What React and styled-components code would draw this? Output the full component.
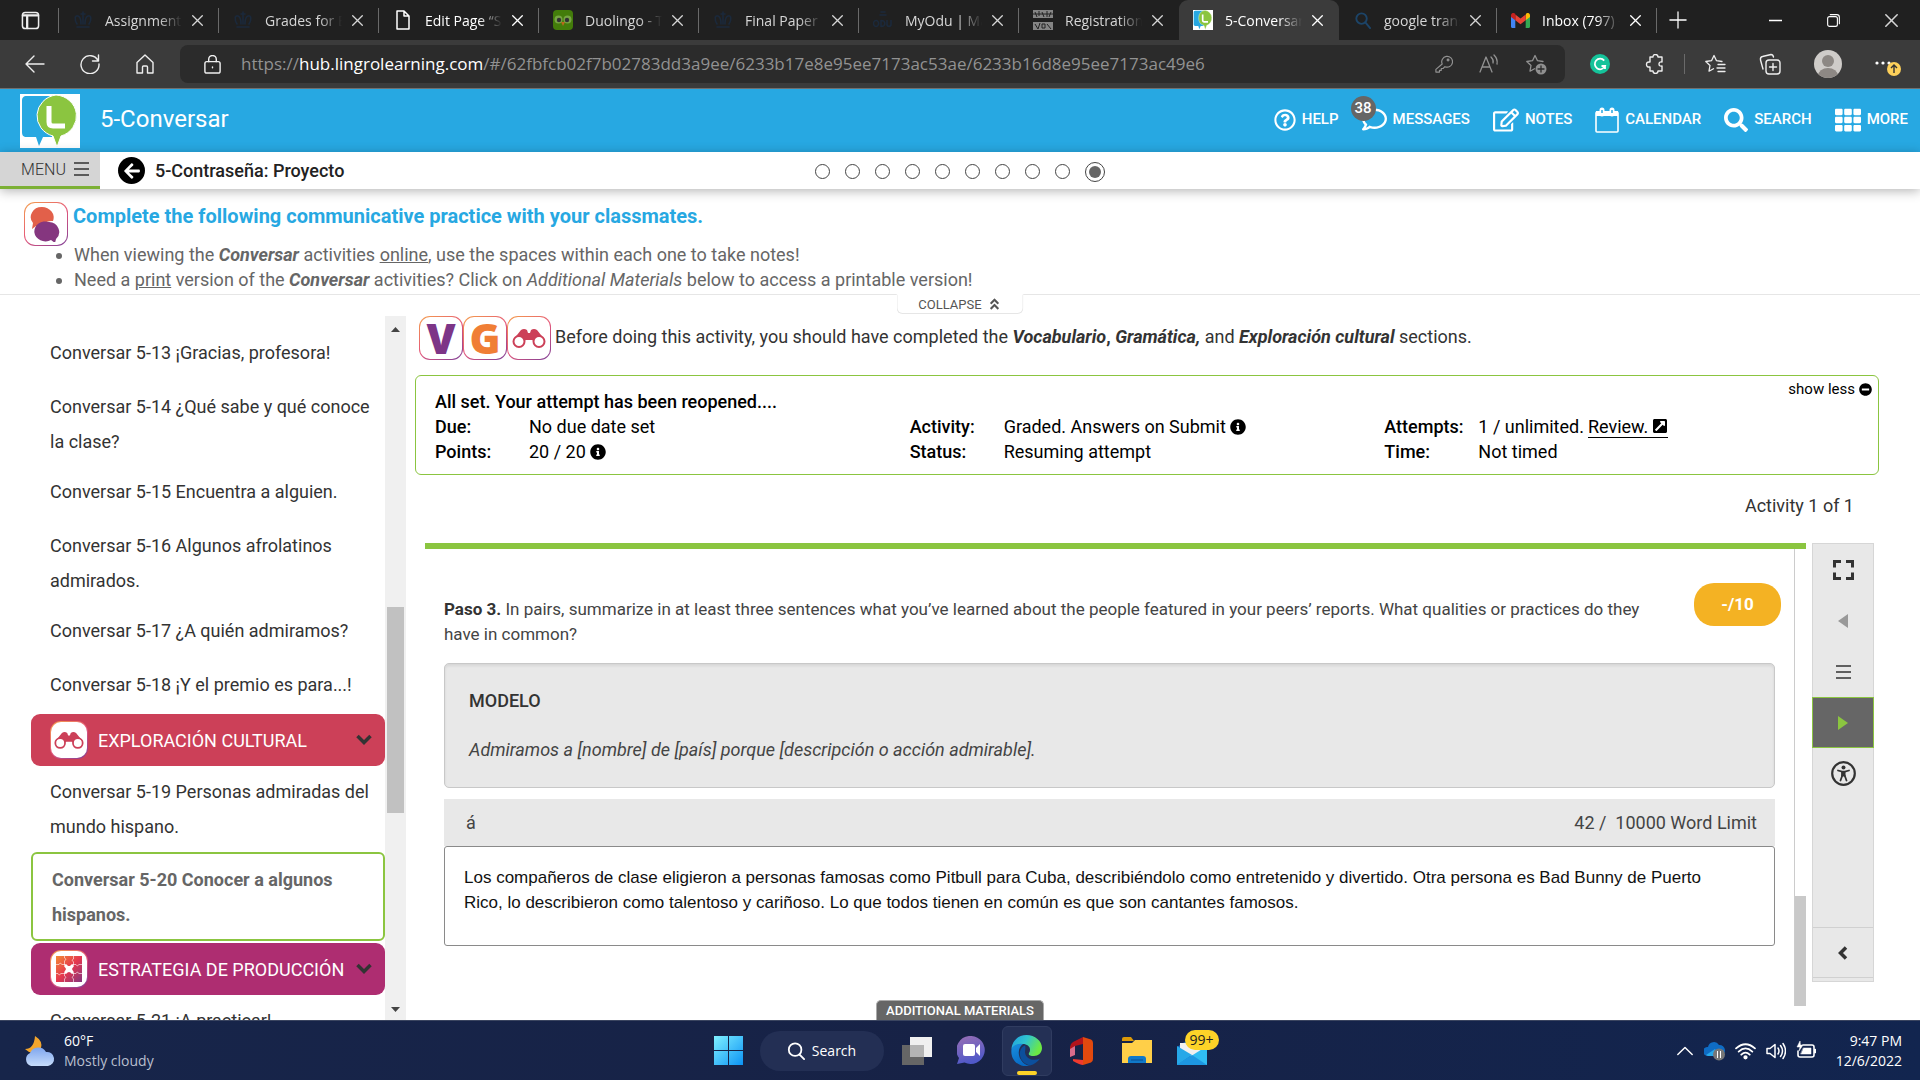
import React from "react";
import styled, { createGlobalStyle, css } from "styled-components";
import {
  FaRegQuestionCircle,
  FaRegComment,
  FaRegEdit,
  FaSearch,
  FaTh,
  FaInfoCircle,
  FaMinusCircle,
  FaExternalLinkSquareAlt,
  FaArrowLeft,
  FaAngleDoubleUp,
} from "react-icons/fa";

const GlobalStyle = createGlobalStyle`
  * { box-sizing: border-box; }
  body {
    margin: 0;
    font-family: Roboto, "Liberation Sans", sans-serif;
    font-size: 18px;
    line-height: 25px;
    color: #333;
    background: #fff;
  }
  button {
    font: inherit;
    color: inherit;
    background: none;
    border: 0;
    padding: 0;
    cursor: pointer;
  }
  a { color: inherit; text-decoration: none; }
  svg { display: block; flex: none; }
  h1, h2, p, ul, dl, dd { margin: 0; padding: 0; }
`;

const systemFont = css`
  font-family: "Open Sans", "Noto Sans", sans-serif;
`;

const Screen = styled.div`
  display: flex;
  flex-direction: column;
  height: 100vh;
  overflow: hidden;
`;

/* ---------- browser ---------- */

const TabStrip = styled.div`
  ${systemFont}
  display: flex;
  height: 40px;
  flex: none;
  background: #202020;
  color: #d6d6d6;
  font-size: 14px;
`;

const TabActions = styled.button`
  display: flex;
  align-items: center;
  justify-content: flex-end;
  width: 59px;
  padding-right: 19px;
`;

const Tab = styled.div`
  display: flex;
  align-items: center;
  flex: 0 1 ${(p) => p.$width || 160}px;
  min-width: 0;
  padding: 0 16px 0 14px;
  border-radius: ${(p) => (p.$active ? "9px 9px 0 0" : "0")};
  background: ${(p) => (p.$active ? "#3b3b3b" : "none")};
  color: ${(p) => (p.$bright ? "#fff" : "inherit")};
`;

const Divider = styled.span`
  width: 1px;
  height: ${(p) => p.$height || 25}px;
  align-self: center;
  margin-left: -1px;
  background: #6a6a6a;
`;

const TabTitle = styled.button`
  flex: 1;
  min-width: 0;
  margin: 0 10px 0 12px;
  overflow: hidden;
  white-space: nowrap;
  text-align: left;
  mask-image: linear-gradient(90deg, #000 70%, transparent);
`;

const WindowButtons = styled.div`
  display: flex;
  flex: 1;
  align-items: center;
  justify-content: flex-end;
`;

const WindowButton = styled.button`
  display: flex;
  align-items: center;
  justify-content: center;
  width: 58px;
  height: 40px;
`;

const NewTab = styled(WindowButton)`
  width: 42px;
`;

const Toolbar = styled.div`
  ${systemFont}
  display: flex;
  align-items: center;
  height: 49px;
  flex: none;
  padding: 0 18px 0 25px;
  border-bottom: 1px solid #707070;
  background: #3b3b3b;
  color: #eee;
`;

const ToolGroup = styled.div`
  display: flex;
  align-items: center;
  gap: ${(p) => p.$gap}px;
`;

const Shortcuts = styled(ToolGroup)`
  margin-left: 20px;
`;

const AddressBar = styled.div`
  display: flex;
  align-items: center;
  flex: 1;
  height: 38px;
  margin: 0 25px;
  padding: 0 18px 0 23px;
  border-radius: 8px;
  background: #2b2b2b;
  color: #929292;
  font-size: 17px;
`;

const Address = styled.a`
  flex: 1;
  margin-left: 19px;
  padding-bottom: 2px;
  white-space: nowrap;
  b {
    font-weight: 400;
    color: #fff;
  }
`;

/* ---------- course header ---------- */

const Header = styled.header`
  display: flex;
  align-items: center;
  height: 63px;
  flex: none;
  padding: 0 12px 0 20px;
  background: #27a8e2;
  color: #fff;
  h1 {
    flex: 1;
    margin-left: 20px;
    padding-bottom: 2px;
    font-size: 24px;
    font-weight: 400;
  }
`;

const HeaderMenu = styled.nav`
  display: flex;
  gap: 23px;
  padding-bottom: 2px;
`;

const HeaderLink = styled.a`
  position: relative;
  display: flex;
  align-items: center;
  gap: 6px;
  font-size: 15px;
  font-weight: 500;
`;

const Count = styled.span`
  position: absolute;
  top: -11px;
  left: -11px;
  width: 25px;
  height: 25px;
  border-radius: 50%;
  background: #666;
  font-size: 15px;
  line-height: 24px;
  text-align: center;
`;

const Crumbs = styled.div`
  position: relative;
  display: grid;
  grid-template-columns: 1fr auto 1fr;
  align-items: center;
  height: 37px;
  flex: none;
  background: #fff;
  box-shadow: 0 2px 12px rgba(0, 0, 0, 0.3);
`;

const CrumbLeft = styled.div`
  display: flex;
  align-items: center;
  height: 37px;
  h2 {
    margin-left: 10px;
    font-size: 18px;
    font-weight: 500;
    color: #222;
  }
`;

const MenuButton = styled.button`
  display: flex;
  align-items: center;
  justify-content: center;
  gap: 8px;
  width: 100px;
  height: 37px;
  margin-right: 18px;
  padding-left: 10px;
  border-bottom: 3px solid #7cb035;
  background: #d5d5d5;
  font-size: 16px;
  font-weight: 300;
`;

const BackButton = styled.button`
  display: flex;
  align-items: center;
  justify-content: center;
  width: 27px;
  height: 27px;
  border-radius: 50%;
  background: #000;
  color: #fff;
`;

const Steps = styled.div`
  display: flex;
  align-items: center;
  gap: 15px;
  padding-top: 2px;
`;

const Step = styled.button`
  width: 15px;
  height: 15px;
  border: 1px solid #444;
  border-radius: 50%;
  ${(p) =>
    p.$current &&
    css`
      width: 20px;
      height: 20px;
      background: #666 content-box;
      padding: 3px;
    `}
`;

const Instructions = styled.section`
  display: flex;
  gap: 5px;
  flex: none;
  padding: 13px 24px 2px;
  border-bottom: 1px solid #e6e6e6;
  color: #666;
  h2 {
    margin-bottom: 12px;
    font-size: 20px;
    line-height: 28px;
    font-weight: 700;
    color: #27a8e2;
  }
`;

const Notes = styled.ul`
  padding-left: 1px;
`;

const Tile = styled.span`
  display: flex;
  align-items: center;
  justify-content: center;
  flex: none;
  width: ${(p) => p.$size}px;
  height: ${(p) => p.$size}px;
  border: 1px solid transparent;
  border-radius: 11px;
  background: linear-gradient(#fff, #fff) padding-box,
    linear-gradient(145deg, #f5a04a, #e5577a 50%, #7d3f98) border-box;
  font-family: "Open Sans", "Noto Sans", sans-serif;
  font-size: 42px;
  font-weight: 800;
  line-height: 42px;
  color: ${(p) => p.$color};
`;

/* ---------- body ---------- */

const Body = styled.div`
  position: relative;
  display: flex;
  flex: 1;
  min-height: 0;
`;

const Collapse = styled.button`
  position: absolute;
  top: -1px;
  left: 50%;
  display: flex;
  align-items: center;
  justify-content: center;
  gap: 6px;
  width: 127px;
  height: 20px;
  transform: translateX(-50%);
  border: 1px solid #e6e6e6;
  border-top-color: #fff;
  border-radius: 0 0 6px 6px;
  background: #fff;
  font-size: 13px;
  color: #555;
`;

const Sidebar = styled.aside`
  display: flex;
  flex: none;
  width: 406px;
  margin-top: 21px;
  overflow: hidden;
`;

const Lessons = styled.nav`
  display: flex;
  flex-direction: column;
  flex: 1;
  min-width: 0;
  padding: 11px 0 0 31px;
  line-height: 35px;
`;

const Lesson = styled.a`
  flex: none;
  min-height: 54px;
  padding: 8px 10px 7px 19px;
  ${(p) =>
    p.$current &&
    css`
      margin: 1px 0;
      border: 2px solid #8bc540;
      border-radius: 6px;
      font-weight: 700;
      color: #666;
    `}
`;

const Section = styled.button`
  display: flex;
  align-items: center;
  flex: none;
  height: 52px;
  margin-top: 1px;
  padding: 0 13px 0 19px;
  border-radius: 9px;
  background: ${(p) => p.$color};
  color: #fff;
  text-align: left;
  span:nth-child(2) {
    flex: 1;
    margin-left: 10px;
    white-space: nowrap;
  }
  > svg {
    color: #333;
  }
`;

const ScrollTrack = styled.div`
  display: flex;
  flex-direction: column;
  align-items: center;
  width: 21px;
  padding: 11px 2px 8px;
  background: #f0f0f0;
`;

const ScrollThumb = styled.div`
  flex: 0 0 30%;
  width: 17px;
  margin: 275px 0 auto;
  background: #c1c1c1;
`;

const Main = styled.main`
  flex: 1;
  min-width: 0;
  display: flex;
  flex-direction: column;
  padding: 21px 41px 14px 9px;
`;

const Prereq = styled.div`
  display: flex;
  padding-left: 4px;
  p {
    margin: 8px 0 0 4px;
  }
`;

const StatusBox = styled.section`
  position: relative;
  margin-top: 15px;
  padding: 13px 19px 10px;
  border: 1px solid #8bc540;
  border-radius: 6px;
  color: #000;
  b {
    font-weight: 500;
  }
`;

const Facts = styled.dl`
  display: grid;
  grid-template-columns: repeat(3, 1fr);
`;

const Fact = styled.div`
  display: flex;
  dt {
    width: 94px;
    font-weight: 500;
  }
  dd {
    display: flex;
    align-items: center;
    gap: 4px;
  }
`;

const Review = styled.a`
  display: flex;
  align-items: center;
  gap: 4px;
  height: 22px;
  border-bottom: 1px solid #000;
`;

const ShowLess = styled.button`
  position: absolute;
  top: 1px;
  right: 6px;
  display: flex;
  align-items: center;
  gap: 4px;
  font-size: 15px;
`;

const Position = styled.p`
  padding: 18px 25px 0 0;
  text-align: right;
`;

const Workspace = styled.div`
  display: flex;
  flex: 1;
  align-items: flex-start;
  gap: 6px;
  min-height: 0;
  margin-top: 25px;
  padding: 0 5px 0 10px;
`;

const Panel = styled.section`
  display: flex;
  flex: 1;
  min-width: 0;
  align-self: stretch;
  border-top: 6px solid #8bc540;
`;

const Exercise = styled.div`
  flex: 1;
  min-width: 0;
  padding: 34px 19px 0;
  border-right: 1px solid #ccc;
`;

const PanelScroll = styled.div`
  display: flex;
  flex-direction: column;
  justify-content: flex-end;
  width: 11px;
  &::after {
    content: "";
    height: 24%;
    background: #c9c9c9;
  }
`;

const Prompt = styled.div`
  display: flex;
  align-items: flex-start;
  gap: 38px;
  margin-right: -6px;
  color: #444;
  font-size: 17px;
  p {
    flex: 1;
    padding-top: 14px;
  }
  b {
    font-weight: 700;
    color: #333;
  }
`;

const Score = styled.span`
  width: 87px;
  height: 43px;
  border-radius: 20px;
  background: #f4b223;
  color: #fff;
  font-weight: 700;
  line-height: 42px;
  text-align: center;
`;

const Model = styled.div`
  margin-top: 16px;
  padding: 24px 24px 25px;
  border: 1px solid #c8c8c8;
  border-radius: 5px;
  background: #e8e8e8;
  box-shadow: inset 0 2px 3px rgba(0, 0, 0, 0.08);
  color: #444;
  b {
    display: block;
    margin-bottom: 24px;
    font-weight: 500;
    color: #333;
  }
`;

const AnswerBar = styled.div`
  display: flex;
  justify-content: space-between;
  margin-top: 11px;
  padding: 11px 18px 11px 22px;
  background: #e8e8e8;
  color: #444;
  white-space: pre;
`;

const Answer = styled.textarea`
  display: block;
  width: 100%;
  height: 100px;
  padding: 18px 50px 18px 19px;
  border: 1px solid #8a8a8a;
  border-radius: 3px;
  resize: none;
  overflow: hidden;
  font: 17px/25px "Liberation Sans", Arial, sans-serif;
  color: #111;
`;

const Tools = styled.div`
  display: flex;
  flex-direction: column;
  width: 62px;
  height: 439px;
  padding-bottom: 3px;
  border: 1px solid #d6d6d6;
  background: #e8e8e8;
  color: #333;
`;

const Tool = styled.button`
  display: flex;
  align-items: center;
  justify-content: center;
  height: 51px;
  flex: none;
  ${(p) =>
    p.$active &&
    css`
      margin: 0 -1px;
      border: 1px solid #8bc540;
      background: #666;
      color: #8bc540;
    `}
  ${(p) =>
    p.$last &&
    css`
      margin-top: auto;
      border: solid #d0d0d0;
      border-width: 1px 0;
    `}
`;

const Materials = styled.button`
  position: absolute;
  bottom: 0;
  left: 50%;
  width: 168px;
  height: 20px;
  transform: translateX(-50%);
  border: 1px solid #aaa;
  border-bottom: 0;
  border-radius: 5px 5px 0 0;
  background: #666;
  color: #fff;
  font-size: 13px;
  font-weight: 500;
  line-height: 20px;
`;

/* ---------- taskbar ---------- */

const Taskbar = styled.footer`
  ${systemFont}
  display: grid;
  grid-template-columns: 1fr auto 1fr;
  align-items: center;
  height: 60px;
  flex: none;
  padding: 0 18px;
  border-top: 1px solid #3b4560;
  background: linear-gradient(90deg, #17254a, #172246 50%, #12254f);
  color: #fff;
  font-size: 14px;
  line-height: 20px;
`;

const Weather = styled.button`
  display: flex;
  align-items: center;
  gap: 9px;
  padding-left: 6px;
  text-align: left;
  small {
    display: block;
    font-size: 14px;
    color: #b9bfce;
  }
`;

const Apps = styled.div`
  display: flex;
  align-items: center;
  gap: 5px;
`;

const AppButton = styled.button`
  position: relative;
  display: flex;
  align-items: center;
  justify-content: center;
  width: 50px;
  height: 50px;
  border-radius: 6px;
  ${(p) =>
    p.$open &&
    css`
      border: 1px solid #303c60;
      background: #243055;
      &::after {
        content: "";
        position: absolute;
        bottom: 0;
        left: 14px;
        width: 20px;
        height: 4px;
        border-radius: 2px;
        background: #fdd328;
      }
    `}
`;

const SearchPill = styled.button`
  display: flex;
  align-items: center;
  justify-content: center;
  gap: 7px;
  width: 124px;
  height: 40px;
  margin: 0 3px 0 1px;
  border-radius: 20px;
  background: #232f54;
`;

const MailCount = styled.span`
  position: absolute;
  top: 4px;
  left: 18px;
  width: 34px;
  height: 20px;
  border-radius: 10px;
  background: #fdd328;
  color: #222;
  font-size: 14px;
  line-height: 19px;
`;

const Tray = styled.div`
  display: flex;
  align-items: center;
  justify-content: flex-end;
  gap: 10px;
`;

const Clock = styled.time`
  margin-left: 10px;
  text-align: right;
`;

/* ---------- drawings ---------- */

const Line = ({ size = 20, width = 1.4, box = 20, children, ...rest }) => (
  <svg
    width={size}
    height={size}
    viewBox={`0 0 ${box} ${box}`}
    fill="none"
    stroke="currentColor"
    strokeWidth={width}
    strokeLinecap="round"
    strokeLinejoin="round"
    {...rest}
  >
    {children}
  </svg>
);

const Cross = ({ size = 11 }) => (
  <Line size={size} box={11} width={1.3}>
    <path d="M.7.7l9.6 9.6M10.3.7L.7 10.3" />
  </Line>
);

const Crown = () => (
  <Line color="#1b293b" width={1.6}>
    <path d="M4 14C1 9 2 5 5 6s3 5 3 8M16 14c3-5 2-9-1-8s-3 5-3 8M10 2v12M8 4h4M4 17h12" />
  </Line>
);

const PageIcon = () => (
  <Line color="#fff" width={1.5}>
    <path d="M4 1h7l5 5v13H4zM11 1v5h5" />
  </Line>
);

const Owl = () => (
  <svg width="20" height="20" viewBox="0 0 20 20">
    <rect width="20" height="20" rx="4" fill="#437c0a" />
    <circle cx="5.5" cy="9.5" r="4" fill="#76a443" />
    <circle cx="14.5" cy="9.5" r="4" fill="#76a443" />
    <circle cx="6" cy="10" r="2.2" fill="#333" />
    <circle cx="14" cy="10" r="2.2" fill="#333" />
    <path d="M8 12h4l-2 4z" fill="#b86a1c" />
  </svg>
);

const Odu = () => (
  <Line color="#1b293b" width={1.6}>
    <path d="M8 2h4M7 5h6M3 10.500a2.500 3 0 1 0 .1 0M8 10.500v6c5 0 5-6 0-6M14 10.500v4c0 2.500 4 2.500 4 0v-4" />
  </Line>
);

const Stamp = () => (
  <svg width="20" height="20" viewBox="0 0 20 20">
    <path d="M0 0h20v8H0zM0 12h20v8H0z" fill="#858585" />
    <path
      d="M2 2l2 5M6 1v5M9 2l2 5M14 1v6M18 2l-2 5M2 14l3 5M7 13l-2 6M9 14h3v4H9zM14 14l4 5M0 4h20"
      stroke="#222"
      fill="none"
    />
  </svg>
);

const Gmail = () => (
  <svg width="19" height="15" viewBox="0 0 19 15">
    <path d="M0 3v10.500c0 .8.600 1.500 1.400 1.500H4.300V6z" fill="#4285f4" />
    <path d="M19 3v10.500c0 .8-.600 1.500-1.400 1.500h-2.900V6z" fill="#34a853" />
    <path d="M14.700 2v5.200L19 4V2.300C19 .2 16.700-.7 15.200.5z" fill="#fbbc04" />
    <path d="M4.300 7.200V1.500l5.200 4 5.200-4v5.700l-5.200 4z" fill="#ea4335" />
    <path d="M0 2.300V4l4.300 3.200V1L3.800.5C2.300-.7 0 .2 0 2.300z" fill="#c5221f" />
  </svg>
);

const Logo = ({ size = 60, height = size }) => (
  <svg width={size} height={height} viewBox="0 0 60 54" preserveAspectRatio="none">
    <path fill="#fff" d="M0 0h60v54H0z" />
    <path d="M7 2h25v41h-9l-4 9-3-9H7c-4 0-5-2-5-5V7c0-3 1-5 5-5z" fill="#27a8e2" />
    <path
      d="M36 1a22 21 0 0 1 5 41l-4 11-4-11A22 21 0 0 1 36 1z"
      fill="#8bc540"
      stroke="#fff"
    />
    <path d="M29 12v16q0 4 4 4h12" fill="none" stroke="#fff" strokeWidth="5" />
  </svg>
);

const Star = ({ children }) => (
  <Line size={22} box={22} width={1.3}>
    <path d="M18 8.500l-5.500-.8L10 2.500 7.500 7.700 1.800 8.500l4.200 4-1 5.700 4.500-2.500" />
    {children}
  </Line>
);

const Avatar = () => (
  <svg width="28" height="28" viewBox="0 0 28 28">
    <clipPath id="face">
      <circle cx="14" cy="14" r="14" />
    </clipPath>
    <g clipPath="url(#face)">
      <path fill="#cfccc9" d="M0 0h28v28H0z" />
      <circle cx="14" cy="11" r="6" fill="#8d8884" />
      <ellipse cx="14" cy="26" rx="10" ry="8" fill="#8d8884" />
    </g>
  </svg>
);

const More = () => (
  <svg width="27" height="24" viewBox="0 0 27 24">
    <g fill="#fff">
      <circle cx="2" cy="11" r="1.600" />
      <circle cx="8" cy="11" r="1.600" />
      <circle cx="14" cy="11" r="1.600" />
    </g>
    <circle cx="19" cy="17" r="7" fill="#fdd05a" />
    <path d="M19 21v-8M16 16l3-3 3 3" fill="none" stroke="#333" strokeWidth="1.400" />
  </svg>
);

const Grammarly = () => (
  <svg width="20" height="20" viewBox="0 0 20 20">
    <circle cx="10" cy="10" r="10" fill="#15c39a" />
    <path
      d="M14.200 6.600A5.300 5.300 0 1 0 15 12h-3.500M15 11.500V15"
      fill="none"
      stroke="#fff"
      strokeWidth="1.800"
    />
  </svg>
);

const Calendar = () => (
  <svg width="24" height="26" viewBox="0 0 24 26" fill="none" stroke="#fff">
    <rect x="1" y="5" width="22" height="20" rx="1" strokeWidth="1.600" />
    <path d="M1 4h22v5H1z" fill="#fff" stroke="none" />
    <path d="M7 7V3M17 7V3" strokeWidth="5" strokeLinecap="round" />
    <path d="M7 6V3M17 6V3" stroke="#27a8e2" strokeWidth="1.500" />
  </svg>
);

const Burger = ({ size = 15 }) => (
  <svg width={size} height="14" viewBox="0 0 15 14" preserveAspectRatio="none" stroke="currentColor" strokeWidth="1.400">
    <path d="M0 1h15M0 7h15M0 13h15" />
  </svg>
);

const Chevron = ({ left }) => (
  <svg width="16" height="16" viewBox="0 0 16 16" fill="none" stroke="currentColor" strokeWidth="3.500">
    <path d={left ? "M11 2.500L5.500 8l5.500 5.500" : "M1.500 4L8 10.500 14.500 4"} />
  </svg>
);

const Corners = () => (
  <svg width="21" height="20" viewBox="0 0 21 20" fill="none" stroke="currentColor" strokeWidth="3">
    <path d="M1.500 7.500v-6H8M13 1.500h6.500v6M19.500 12.500v6H13M8 18.500H1.500v-6" />
  </svg>
);

const Access = () => (
  <svg width="25" height="25" viewBox="0 0 25 25" fill="none" stroke="currentColor" strokeLinecap="round">
    <circle cx="12.500" cy="12.500" r="11.300" strokeWidth="2.200" />
    <circle cx="12.500" cy="6.500" r="2" fill="currentColor" stroke="none" />
    <path d="M7 9.500l4 1.200h3l4-1.200" strokeWidth="1.800" />
    <path d="M11 10.500h3v4.500h-3z" fill="currentColor" strokeWidth="1" />
    <path d="M11.300 14.500L9.500 19.500M13.700 14.500l1.800 5" strokeWidth="1.800" />
  </svg>
);

const Talk = () => (
  <svg width="32" height="36" viewBox="0 0 32 36">
    <path d="M12 1a12 10.500 0 0 1 11 14q-8-1-12 6-3 0-5-1l-4 3 1-6A11 10 0 0 1 12 1z" fill="#e2604a" />
    <path d="M19 16a11 10 0 0 1 7 17l-1 4-4-3A11 10 0 1 1 19 16z" fill="#85367f" />
  </svg>
);

const Binoculars = ({ size = 34 }) => (
  <svg width={size} height={Math.round(size * 0.6)} viewBox="0 0 34 20">
    <path
      d="M1 12L9 2q3-2 6 0l1 3h2l1-3q3-2 6 0l8 10-8 3-5-3h-6l-5 3z"
      fill="#cc4058"
    />
    <circle cx="7" cy="13.500" r="5.500" fill="#fff" stroke="#cc4058" strokeWidth="2" />
    <circle cx="27" cy="13.500" r="5.500" fill="#fff" stroke="#cc4058" strokeWidth="2" />
  </svg>
);

const Puzzle = () => (
  <svg width="28" height="28" viewBox="0 0 28 28">
    <defs>
      <linearGradient id="pz" x1="0" y1="0" x2="1" y2="1">
        <stop offset="0" stopColor="#f38a34" />
        <stop offset=".5" stopColor="#e5374e" />
        <stop offset="1" stopColor="#85367f" />
      </linearGradient>
    </defs>
    <path fill="url(#pz)" d="M1 1h26v26H1z" />
    <path
      d="M9.500 1v2q3 1 0 3v4M18.500 1v3q-3 1 0 3v3M1 9.500h3q1-3 3 0h3M18 9.500h3q1 3 3 0h3M1 18.500h2q1 3 3 0h4M18 18.500h3q1-3 3 0h3M9.500 18v3q3 1 0 3v3M18.500 18v3q-3 1 0 3v3"
      fill="none"
      stroke="#fff"
      strokeWidth=".6"
    />
    <path d="M9.500 9.500q2-1 3 1 1.500 1 3 0 1-2 3-1 1 2-1 3.500-1 1 0 2 2 2 1 3.500-2 1-3-1-1.500-1-3 0-1 2-3 1-1-1.500 1-3.500 1-1 0-2-2-1.500-1-3.500z" fill="#fff" />
  </svg>
);

const Triangle = ({ flip, color, width = 10, height = 14 }) => (
  <svg width={width} height={height} viewBox="0 0 10 14" preserveAspectRatio="none">
    <path d={flip ? "M10 0v14L0 7z" : "M0 0v14l10-7z"} fill={color} />
  </svg>
);

const ScrollArrow = ({ down }) => (
  <svg width="9" height="5" viewBox="0 0 9 5">
    <path d={down ? "M0 0h9L4.500 5z" : "M0 5h9L4.500 0z"} fill="#444" />
  </svg>
);

const MoonCloud = () => (
  <svg width="31" height="32" viewBox="0 0 31 32">
    <defs>
      <linearGradient id="cl" x1="0" y1="0" x2="0" y2="1">
        <stop offset="0" stopColor="#7fa6ee" />
        <stop offset="1" stopColor="#c6dcfb" />
      </linearGradient>
    </defs>
    <path d="M11 1q8 5 6 12-4 6-12 4L1 14q9 0 10-13z" fill="#f3a52c" />
    <path d="M7 31a7 7 0 0 1-1-13 9 9 0 0 1 16-1 7 7 0 0 1 2 14z" fill="url(#cl)" />
  </svg>
);

const Windows = () => (
  <svg width="29" height="29" viewBox="0 0 29 29">
    <defs>
      <linearGradient id="win" x1="0" y1="0" x2="1" y2="1">
        <stop offset="0" stopColor="#7ff0ff" />
        <stop offset="1" stopColor="#0c93f5" />
      </linearGradient>
    </defs>
    <path d="M0 0h14v14H0zM15 0h14v14H15zM0 15h14v14H0zM15 15h14v14H15z" fill="url(#win)" />
  </svg>
);

const TaskView = () => (
  <svg width="30" height="28" viewBox="0 0 30 28">
    <path d="M0 8h22v20H0z" fill="#666" />
    <path d="M8 0h22v20H8z" fill="#f0f0f0" />
    <path d="M8 8h14v12H8z" fill="#b4b4b4" />
  </svg>
);

const Chat = () => (
  <svg width="29" height="29" viewBox="0 0 29 29">
    <defs>
      <linearGradient id="ch" x1="0" y1="0" x2="0.300" y2="1">
        <stop offset="0" stopColor="#9a6fb4" />
        <stop offset="1" stopColor="#5059c9" />
      </linearGradient>
    </defs>
    <path d="M14.500 0a14 14 0 1 1-7 26.500L0 28l2-6A14 14 0 0 1 14.500 0z" fill="url(#ch)" />
    <rect x="6" y="8" width="12" height="12" rx="2" fill="#fff" />
    <path d="M19 12l4-4v12l-4-4z" fill="#fff" />
  </svg>
);

const Edge = () => (
  <svg width="31" height="31" viewBox="0 0 31 31">
    <defs>
      <linearGradient id="ed1" x1="0" y1="0" x2="1" y2="0.400">
        <stop offset="0" stopColor="#1f9de0" />
        <stop offset=".5" stopColor="#30c5cf" />
        <stop offset="1" stopColor="#6ce944" />
      </linearGradient>
      <linearGradient id="ed2" x1="0" y1="0" x2="0.500" y2="1">
        <stop offset="0" stopColor="#1a8fdd" />
        <stop offset="1" stopColor="#0669c4" />
      </linearGradient>
    </defs>
    <path d="M.5 14C1 6 7 0 15.500 0 24 0 31 6 31 13c0 5-4 8-8 8-4 0-6-1-5-3 3-5-1-9-6-9-6 0-10 3-11.500 5z" fill="url(#ed1)" />
    <path d="M.5 14C2 10 7 8 12 9c-3 2-5 6-4 11 1 6 6 10 11 11C8 33-1 25 .500 14z" fill="url(#ed2)" />
    <path d="M14 10.500c-3 1-6 5-5 10 1 6 6 9 10 10 4-1 8-4 10-7-6 3-14 1-15-6 0-3 1-5 0-7z" fill="#0c4f9c" />
  </svg>
);

const Office = () => (
  <svg width="23" height="28" viewBox="0 0 23 28">
    <path d="M13 0L3 5Q0 7 0 10v10l5-3V9l8-2z" fill="#b3131c" />
    <path d="M0 12v8l5-2V9z" fill="#d96c8c" />
    <path d="M13 0l8 2.500Q23 3 23 6v16q0 3-2 3.500L13 28z" fill="#e2490e" />
    <path d="M3 22l10 1v5q-3 0-10-4z" fill="#f03a2e" />
  </svg>
);

const Folder = () => (
  <svg width="30" height="28" viewBox="0 0 30 28">
    <path d="M0 2q0-2 2-2h7l3 4h-12z" fill="#dc9a08" />
    <path d="M0 6h10l3-3h17v23H0z" fill="#ffcf48" />
    <path d="M6 26v-4q0-3 3-3h12q3 0 3 3v4z" fill="#1079c9" />
    <path d="M9 23h12" stroke="#0b4f91" />
  </svg>
);

const Mail = () => (
  <svg width="30" height="28" viewBox="0 0 30 28">
    <path d="M0 10L15 0l15 10v18H0z" fill="#1565b5" />
    <path d="M3 6h24v8l-12 6-12-7z" fill="#f0f0f0" />
    <path d="M0 9l15 9-15 10z" fill="#26a8e8" />
    <path d="M30 9L0 28h30z" fill="#30bdf3" />
    <path d="M30 28L15 18 0 28z" fill="#1d97e2" />
  </svg>
);

const OneDrive = () => (
  <svg width="21" height="21" viewBox="0 0 21 21">
    <path d="M3 16a4.500 4.500 0 0 1 1-9 6 6 0 0 1 11-2 5 5 0 0 1 1 11z" fill="#0f6cc4" />
    <path d="M2 15l9-6 5 7H4z" fill="#28a8ea" />
    <circle cx="15" cy="14.500" r="6" fill="#777" />
    <path d="M13.500 11v7M16.500 11v7" stroke="#fff" />
  </svg>
);

/* ---------- content ---------- */

const tabs = [
  { title: "Assignments", icon: <Crown /> },
  { title: "Grades for E", icon: <Crown /> },
  { title: "Edit Page “S", icon: <PageIcon />, bright: true },
  { title: "Duolingo - T", icon: <Owl /> },
  { title: "Final Paper", icon: <Crown /> },
  { title: "MyOdu | Ma", icon: <Odu /> },
  { title: "Registration", icon: <Stamp />, last: true },
  { title: "5-Conversar", icon: <Logo size={20} />, active: true, bright: true, last: true },
  {
    title: "google trans",
    icon: (
      <Line size={19} color="#1c4468" width={2}>
        <circle cx="9" cy="8" r="5.500" />
        <path d="M13 12l5 6" />
      </Line>
    ),
    width: 158,
  },
  { title: "Inbox (797) -", icon: <Gmail />, bright: true },
];

const lessons = [
  { text: "Conversar 5-13 ¡Gracias, profesora!" },
  { text: "Conversar 5-14 ¿Qué sabe y qué conoce la clase?" },
  { text: "Conversar 5-15 Encuentra a alguien." },
  { text: "Conversar 5-16 Algunos afrolatinos admirados." },
  { text: "Conversar 5-17 ¿A quién admiramos?" },
  { text: "Conversar 5-18 ¡Y el premio es para...!" },
  { section: "EXPLORACIÓN CULTURAL", color: "#cc4058", icon: <Binoculars size={30} /> },
  { text: "Conversar 5-19 Personas admiradas del mundo hispano." },
  { text: "Conversar 5-20 Conocer a algunos hispanos.", current: true },
  { section: "ESTRATEGIA DE PRODUCCIÓN", color: "#ae2d71", icon: <Puzzle /> },
  { text: "Conversar 5-21 ¡A practicar!" },
];

const answer =
  "Los compañeros de clase eligieron a personas famosas como Pitbull para Cuba, describiéndolo como entretenido y divertido. Otra persona es Bad Bunny de Puerto Rico, lo describieron como talentoso y cariñoso. Lo que todos tienen en común es que son cantantes famosos.";

function Browser() {
  return (
    <>
      <TabStrip>
        <TabActions aria-label="Tab actions">
          <Line size={19} color="#eee" width={1.6}>
            <rect x="1.500" y="1.500" width="17" height="17" rx="3" />
            <path d="M2 4.500h16M6.500 6v12" strokeWidth="2.400" />
          </Line>
        </TabActions>
        <Divider />
        {tabs.map((t, i) => (
          <React.Fragment key={i}>
            <Tab $active={t.active} $bright={t.bright} $width={t.width}>
              {t.icon}
              <TabTitle>{t.title}</TabTitle>
              <button aria-label="Close tab">
                <Cross />
              </button>
            </Tab>
            {!t.last && <Divider />}
          </React.Fragment>
        ))}
        <NewTab aria-label="New tab">
          <Line size={18} color="#fff">
            <path d="M10 1v18M1 10h18" />
          </Line>
        </NewTab>
        <WindowButtons>
          <WindowButton aria-label="Minimize">
            <Line size={13} color="#fff" width={2}>
              <path d="M0 10h20" />
            </Line>
          </WindowButton>
          <WindowButton aria-label="Restore">
            <Line size={13} color="#fff" width={1.7}>
              <rect x="1" y="4" width="15" height="15" rx="3" />
              <path d="M5 1h10q4 0 4 4v10" />
            </Line>
          </WindowButton>
          <WindowButton aria-label="Close">
            <Cross size={13} />
          </WindowButton>
        </WindowButtons>
      </TabStrip>
      <Toolbar>
        <ToolGroup $gap={35}>
          <button aria-label="Back">
            <Line>
              <path d="M19 10H1M9 2l-8 8 8 8" />
            </Line>
          </button>
          <button aria-label="Refresh">
            <Line>
              <path d="M18 6.500A9 9 0 1 0 19 10M18.500 1v6h-6" />
            </Line>
          </button>
          <button aria-label="Home">
            <Line>
              <path d="M2 8.500L10 1l8 7.500V19h-5.500v-6q0-1-1-1h-3q-1 0-1 1v6H2z" />
            </Line>
          </button>
        </ToolGroup>
        <AddressBar>
          <Line color="#eee" width={1.5} size={19}>
            <rect x="2" y="7" width="16" height="12" rx="2" />
            <path d="M6 7V4.500a4 4 0 0 1 8 0V7M10 12.500v1" />
          </Line>
          <Address href="#/">
            https://<b>hub.lingrolearning.com</b>
            /#/62fbfcb02f7b02783dd3a9ee/6233b17e8e95ee7173ac53ae/6233b16d8e95ee7173ac49e6
          </Address>
          <ToolGroup $gap={26}>
            <Line size={18} width={1.3}>
              <path d="M8 10a6 6 0 1 1 3 3l-2 2H7v2H5v2H1v-3z" />
              <circle cx="14.500" cy="5.500" r="1" />
            </Line>
            <Line size={20} width={1.3}>
              <path d="M1 18L7 3l6 15M3 13h8M12 3q3 3 2 6M15 1q4 4 3 9" />
            </Line>
            <Star>
              <circle cx="16" cy="16" r="5.500" fill="#8f8f8f" stroke="none" />
              <path d="M13 16h6M16 13v6" stroke="#2b2b2b" />
            </Star>
          </ToolGroup>
        </AddressBar>
        <ToolGroup $gap={35}>
          <Grammarly />
          <Line>
            <path d="M5 3h3q0-2.500 2.500-2.500T13 3h4v5q-3-.5-3 2t3 2v5h-4q0 2.500-2.500 2.500T8 17H5v-4q-3.500.5-3.500-2.500T5 8z" />
          </Line>
        </ToolGroup>
        <Shortcuts $gap={33}>
          <ToolGroup $gap={19}>
            <Divider $height={20} />
            <Star>
              <path d="M14 11.500h7M13 15h8M14 18.500h7" />
            </Star>
          </ToolGroup>
          <Line size={22} box={22}>
            <rect x="7" y="7" width="14" height="14" rx="3" />
            <path d="M14 10.500v7M10.500 14h7M4 16l-2.500-9q-.5-3 2-3.500L12 1.500q2 0 2.500 2.500" />
          </Line>
          <Avatar />
          <More />
        </Shortcuts>
      </Toolbar>
    </>
  );
}

function CourseHeader() {
  return (
    <>
      <Header>
        <Logo height={54} />
        <h1>5-Conversar</h1>
        <HeaderMenu>
          <HeaderLink href="#help">
            <FaRegQuestionCircle size={22} /> HELP
          </HeaderLink>
          <HeaderLink href="#messages">
            <FaRegComment size={25} />
            <Count>38</Count> MESSAGES
          </HeaderLink>
          <HeaderLink href="#notes">
            <FaRegEdit size={26} /> NOTES
          </HeaderLink>
          <HeaderLink href="#calendar">
            <Calendar /> CALENDAR
          </HeaderLink>
          <HeaderLink href="#search">
            <FaSearch size={24} /> SEARCH
          </HeaderLink>
          <HeaderLink href="#more">
            <FaTh size={26} /> MORE
          </HeaderLink>
        </HeaderMenu>
      </Header>
      <Crumbs>
        <CrumbLeft>
          <MenuButton>
            MENU <Burger />
          </MenuButton>
          <BackButton aria-label="Back to unit">
            <FaArrowLeft size={18} />
          </BackButton>
          <h2>5-Contraseña: Proyecto</h2>
        </CrumbLeft>
        <Steps>
          {Array.from({ length: 10 }, (_, i) => (
            <Step key={i} $current={i === 9} aria-label={`Page ${i + 1}`} />
          ))}
        </Steps>
      </Crumbs>
      <Instructions>
        <Tile $size={44}>
          <Talk />
        </Tile>
        <div>
          <h2>Complete the following communicative practice with your classmates.</h2>
          <Notes>
            <li>
              When viewing the <b><i>Conversar</i></b> activities <u>online</u>, use the spaces
              within each one to take notes!
            </li>
            <li>
              Need a <u>print</u> version of the <b><i>Conversar</i></b> activities? Click on{" "}
              <i>Additional Materials</i> below to access a printable version!
            </li>
          </Notes>
        </div>
      </Instructions>
    </>
  );
}

function LessonList() {
  return (
    <Sidebar>
      <Lessons>
        {lessons.map((l) =>
          l.section ? (
            <Section key={l.section} $color={l.color}>
              <Tile $size={38}>{l.icon}</Tile>
              <span>{l.section}</span>
              <Chevron />
            </Section>
          ) : (
            <Lesson key={l.text} href="#lesson" $current={l.current}>
              {l.text}
            </Lesson>
          )
        )}
      </Lessons>
      <ScrollTrack>
        <ScrollArrow />
        <ScrollThumb />
        <ScrollArrow down />
      </ScrollTrack>
    </Sidebar>
  );
}

function Activity() {
  return (
    <Main>
      <Prereq>
        <Tile $size={44} $color="#7d3587">V</Tile>
        <Tile $size={44} $color="#f07e35">G</Tile>
        <Tile $size={44}>
          <Binoculars />
        </Tile>
        <p>
          Before doing this activity, you should have completed the{" "}
          <b><i>Vocabulario</i>, <i>Gramática,</i></b> and <b><i>Exploración cultural</i></b>{" "}
          sections.
        </p>
      </Prereq>
      <StatusBox>
        <b>All set. Your attempt has been reopened....</b>
        <ShowLess>
          show less <FaMinusCircle size={13} />
        </ShowLess>
        <Facts>
          <Fact>
            <dt>Due:</dt>
            <dd>No due date set</dd>
          </Fact>
          <Fact>
            <dt>Activity:</dt>
            <dd>
              Graded. Answers on Submit <FaInfoCircle size={16} />
            </dd>
          </Fact>
          <Fact>
            <dt>Attempts:</dt>
            <dd>
              1 / unlimited.{" "}
              <Review href="#review">
                Review. <FaExternalLinkSquareAlt size={16} />
              </Review>
            </dd>
          </Fact>
          <Fact>
            <dt>Points:</dt>
            <dd>
              20 / 20 <FaInfoCircle size={16} />
            </dd>
          </Fact>
          <Fact>
            <dt>Status:</dt>
            <dd>Resuming attempt</dd>
          </Fact>
          <Fact>
            <dt>Time:</dt>
            <dd>Not timed</dd>
          </Fact>
        </Facts>
      </StatusBox>
      <Position>Activity 1 of 1</Position>
      <Workspace>
        <Panel>
          <Exercise>
            <Prompt>
              <p>
                <b>Paso 3.</b> In pairs, summarize in at least three sentences what you’ve learned
                about the people featured in your peers’ reports. What qualities or practices do
                they have in common?
              </p>
              <Score>-/10</Score>
            </Prompt>
            <Model>
              <b>MODELO</b>
              <i>Admiramos a [nombre] de [país] porque [descripción o acción admirable].</i>
            </Model>
            <AnswerBar>
              <button>á</button>
              <span>42 /  10000 Word Limit</span>
            </AnswerBar>
            <Answer aria-label="Answer" defaultValue={answer} spellCheck={false} />
          </Exercise>
          <PanelScroll />
        </Panel>
        <Tools>
          <Tool aria-label="Full screen">
            <Corners />
          </Tool>
          <Tool aria-label="Previous">
            <Triangle flip color="#999" />
          </Tool>
          <Tool aria-label="Activity list">
            <Burger />
          </Tool>
          <Tool aria-label="Next" $active>
            <Triangle color="#8bc540" />
          </Tool>
          <Tool aria-label="Accessibility">
            <Access />
          </Tool>
          <Tool aria-label="Close tools" $last>
            <Chevron left />
          </Tool>
        </Tools>
      </Workspace>
    </Main>
  );
}

function SystemBar() {
  return (
    <Taskbar>
      <Weather>
        <MoonCloud />
        <span>
          60°F
          <small>Mostly cloudy</small>
        </span>
      </Weather>
      <Apps>
        <AppButton aria-label="Start"><Windows /></AppButton>
        <SearchPill>
          <Line size={18} width={2}>
            <circle cx="9" cy="8.500" r="7" />
            <path d="M14 14l5 5" />
          </Line>
          Search
        </SearchPill>
        <AppButton aria-label="Task view"><TaskView /></AppButton>
        <AppButton aria-label="Chat"><Chat /></AppButton>
        <AppButton aria-label="Edge" $open><Edge /></AppButton>
        <AppButton aria-label="Office"><Office /></AppButton>
        <AppButton aria-label="File Explorer"><Folder /></AppButton>
        <AppButton aria-label="Mail">
          <Mail />
          <MailCount>99+</MailCount>
        </AppButton>
      </Apps>
      <Tray>
        <Line size={18} width={1.6}>
          <path d="M2 14l8-8 8 8" />
        </Line>
        <OneDrive />
        <Line size={21} width={1.7}>
          <path d="M1 8q9-8 18 0M3.500 11q6.500-6 13 0M6 14q4-4 8 0" />
          <circle cx="10" cy="16.500" r="1.200" fill="currentColor" />
        </Line>
        <Line width={1.500}>
          <path d="M1 7.500v5h3l5 4v-13l-5 4zM12 7q2 3 0 6M14.500 4.500q4 5.500 0 11M17 2.500q5 7.500 0 15" />
        </Line>
        <Line width={1.600}>
          <path d="M7 4h9q2 0 2 2v8q0 2-2 2H4q-2 0-2-2v-4M19.300 8.500v3" />
          <path d="M7.500 7H15v6H5zM4 0L1 6h3L3 10l4-6H4.500z" fill="currentColor" strokeWidth=".5" />
        </Line>
        <Clock>
          9:47 PM
          <br />
          12/6/2022
        </Clock>
      </Tray>
    </Taskbar>
  );
}

export default function App() {
  return (
    <Screen>
      <GlobalStyle />
      <Browser />
      <CourseHeader />
      <Body>
        <LessonList />
        <Activity />
        <Collapse>
          COLLAPSE <FaAngleDoubleUp size={14} />
        </Collapse>
        <Materials>ADDITIONAL MATERIALS</Materials>
      </Body>
      <SystemBar />
    </Screen>
  );
}
